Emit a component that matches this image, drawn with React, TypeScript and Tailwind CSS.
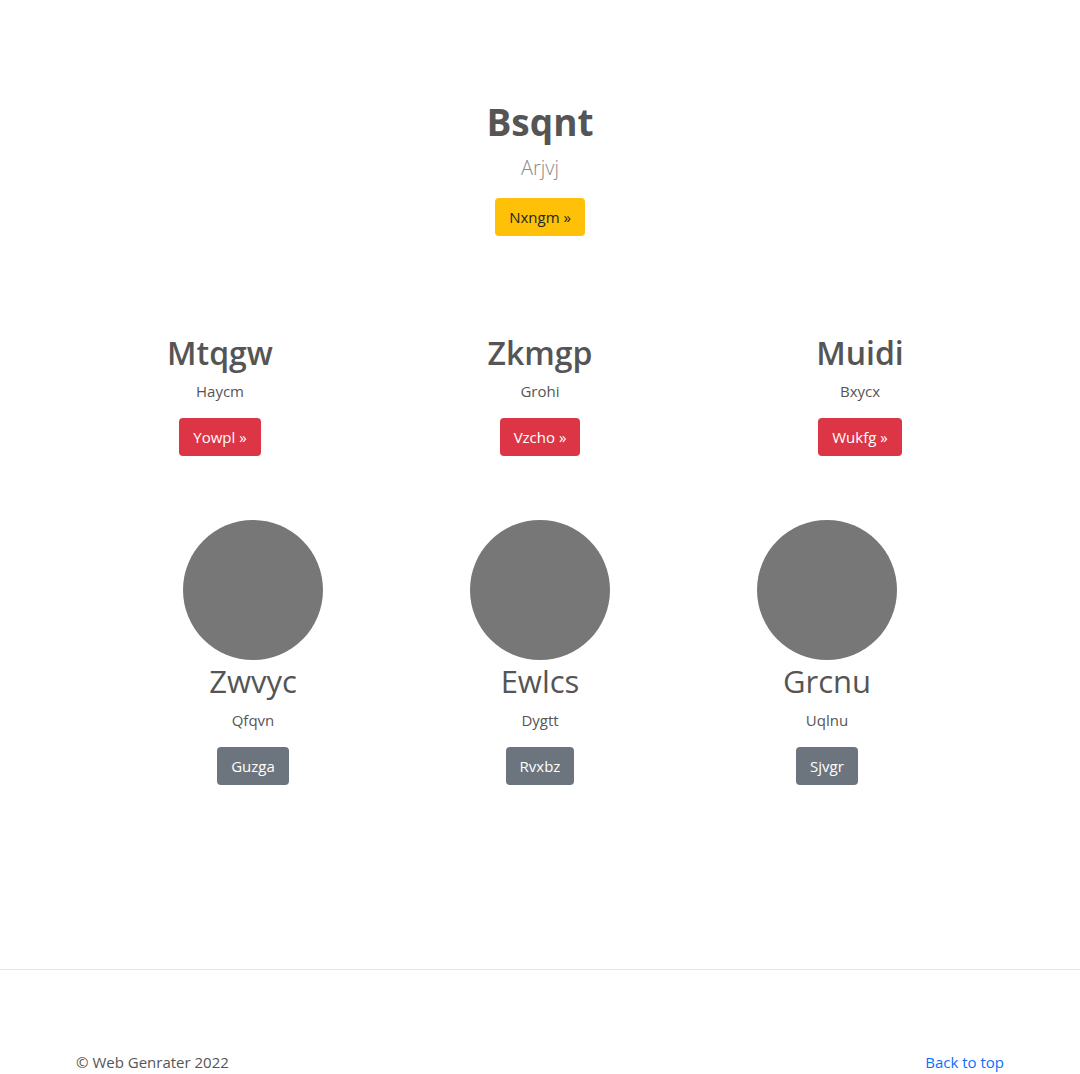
import React from "react";

const font = { fontFamily: '"Open Sans", "Noto Sans", sans-serif' };

function Feature({ title, text, btn }: { title: string; text: string; btn: string }) {
  return (
    <div className="flex flex-col items-center">
      <h2 className="text-[32px] leading-[38px] font-semibold text-[#555555]">{title}</h2>
      <p className="mt-[7px] text-[15px] leading-[24px] text-[#555555]">{text}</p>
      <a className="mt-[15px] h-[38px] px-[14px] flex items-center rounded-[4px] bg-[#dc3545] text-white text-[15px]">
        {btn} »
      </a>
    </div>
  );
}

function Person({ title, text, btn }: { title: string; text: string; btn: string }) {
  return (
    <div className="flex flex-col items-center">
      <div className="w-[140px] h-[140px] rounded-full bg-[#777777]" />
      <h2 className="mt-[2px] text-[31px] leading-[38px] font-normal text-[#555555]">{title}</h2>
      <p className="mt-[8px] text-[15px] leading-[24px] text-[#555555]">{text}</p>
      <a className="mt-[15px] h-[38px] px-[14px] flex items-center rounded-[4px] bg-[#6c757d] text-white text-[15px]">
        {btn}
      </a>
    </div>
  );
}

export default function App() {
  return (
    <div style={font} className="min-h-[1074px] bg-white flex flex-col">
      <main className="pt-[98px] flex flex-col items-center">
        <h1 className="text-[37px] leading-[48px] font-bold text-[#555555]">Bsqnt</h1>
        <p className="mt-[7px] text-[20px] leading-[30px] font-light text-[#8a8a8a]">Arjvj</p>
        <a className="mt-[15px] h-[38px] px-[14px] flex items-center rounded-[4px] bg-[#ffc107] text-[#212529] text-[15px]">
          Nxngm »
        </a>

        <div className="mt-[98px] w-[960px] grid grid-cols-3">
          <Feature title="Mtqgw" text="Haycm" btn="Yowpl" />
          <Feature title="Zkmgp" text="Grohi" btn="Vzcho" />
          <Feature title="Muidi" text="Bxycx" btn="Wukfg" />
        </div>

        <div className="mt-[64px] w-[861px] grid grid-cols-3">
          <Person title="Zwvyc" text="Qfqvn" btn="Guzga" />
          <Person title="Ewlcs" text="Dygtt" btn="Rvxbz" />
          <Person title="Grcnu" text="Uqlnu" btn="Sjvgr" />
        </div>
      </main>

      <div className="mt-[184px] border-t border-[#e5e5e5]" />

      <footer className="mx-auto w-[960px] px-4 pt-[80px] flex justify-between text-[15px] leading-[24px]">
        <p className="text-[#555555]">© Web Genrater 2022</p>
        <a className="text-[#0d6efd]">Back to top</a>
      </footer>
    </div>
  );
}
